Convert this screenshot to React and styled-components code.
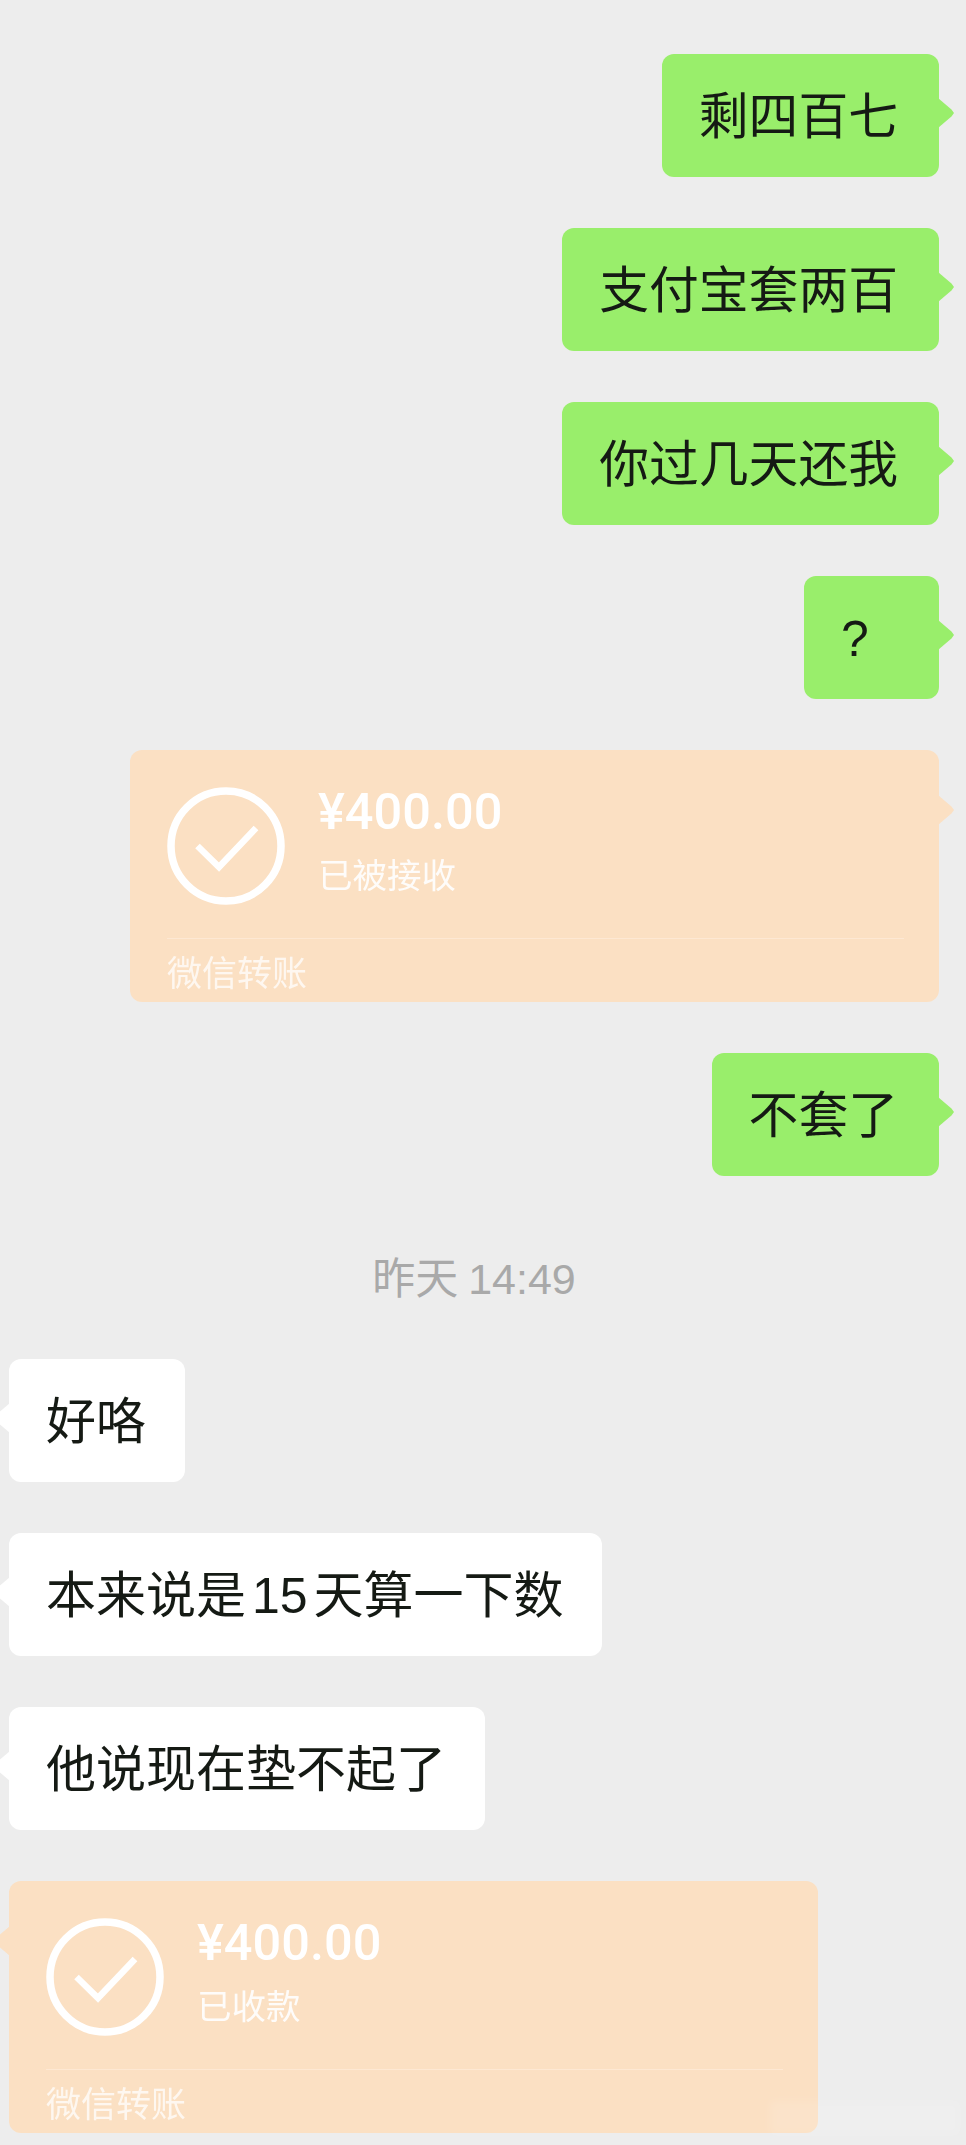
import styled, { createGlobalStyle, css } from 'styled-components';

const GlobalStyle = createGlobalStyle`
  html, body {
    margin: 0;
    padding: 0;
    background: #ededed;
  }
  body {
    font-family: "Liberation Sans", "Noto Sans CJK SC", sans-serif;
  }
`;

const Page = styled.div`
  width: 966px;
  height: 2145px;
  box-sizing: border-box;
  padding: 54px 27px 12px 9px;
  overflow: hidden;
  position: relative;
  background: #ededed;
  display: flex;
  flex-direction: column;
  gap: 51px;
`;

const Row = styled.div`
  display: flex;
  justify-content: ${(p) => (p.$mine ? 'flex-end' : 'flex-start')};
`;

const tail = css`
  position: relative;
  &::after {
    content: '';
    position: absolute;
    top: ${(p) => p.$tailTop}px;
    width: 16px;
    height: 30px;
    background: inherit;
    ${(p) =>
      p.$mine
        ? css`
            right: -15px;
            clip-path: polygon(0 0, 84% 38%, 100% 50%, 84% 62%, 0 100%);
          `
        : css`
            left: -15px;
            clip-path: polygon(100% 0, 16% 38%, 0 50%, 16% 62%, 100% 100%);
          `}
  }
`;

const Bubble = styled.div`
  ${tail}
  box-sizing: border-box;
  height: 123px;
  min-width: ${(p) => p.$minWidth || 0}px;
  padding: ${(p) => (p.$mine ? '0 41px 0 37px' : '0 39px 0 37px')};
  border-radius: 12px;
  background: ${(p) => (p.$mine ? '#99ee6b' : '#ffffff')};
  color: #151a14;
  font-size: ${(p) => (p.$mine ? 49.8 : 50)}px;
  line-height: 126px;
  word-spacing: -8px;
  white-space: nowrap;
`;

const TimeLabel = styled.div`
  margin-top: 23px;
  height: 58px;
  line-height: 58px;
  text-align: center;
  color: #a9a9a9;
  font-size: 43px;
  word-spacing: -2px;
`;

const TransferCard = styled.div`
  ${tail}
  box-sizing: border-box;
  width: ${(p) => p.$width}px;
  height: 252px;
  padding: 0 35px 0 37px;
  border-radius: 12px;
  background: #fbe0c3;
  color: #ffffff;
  display: flex;
  flex-direction: column;
`;

const CardBody = styled.div`
  height: 189px;
  flex: none;
  display: flex;
  align-items: flex-start;
  gap: 33px;
  padding-top: 37px;
  box-sizing: border-box;
  border-bottom: 1px solid #fde8d3;
`;

const CheckIcon = styled.svg`
  width: 118px;
  height: 118px;
  flex: none;
`;

const CardInfo = styled.div`
  display: flex;
  flex-direction: column;
`;

const Amount = styled.div`
  font-family: "Roboto", "Liberation Sans", sans-serif;
  font-weight: 500;
  font-size: 50.5px;
  line-height: 50px;
`;

const Status = styled.div`
  font-size: 34.5px;
  line-height: 50px;
  margin-top: 14px;
  opacity: 0.92;
`;

const CardFooter = styled.div`
  font-size: 35px;
  line-height: 50px;
  margin-top: 10px;
  opacity: 0.75;
`;

const Watermark = styled.div`
  position: absolute;
  right: 6px;
  bottom: 10px;
  width: 190px;
  height: 34px;
  background: rgba(255, 255, 255, 0.12);
  filter: blur(4px);
`;

const Check = () => (
  <CheckIcon viewBox="0 0 118 118" fill="none" stroke="#ffffff">
    <circle cx="59" cy="59" r="55" strokeWidth="7.5" />
    <path d="M30.5 59 L52 80 L89 41" strokeWidth="6.5" />
  </CheckIcon>
);

function Transfer({ mine, width, status }) {
  return (
    <Row $mine={mine}>
      <TransferCard $mine={mine} $width={width} $tailTop={45}>
        <CardBody>
          <Check />
          <CardInfo>
            <Amount>¥400.00</Amount>
            <Status>{status}</Status>
          </CardInfo>
        </CardBody>
        <CardFooter>微信转账</CardFooter>
      </TransferCard>
    </Row>
  );
}

function Message({ mine, minWidth, children }) {
  return (
    <Row $mine={mine}>
      <Bubble $mine={mine} $tailTop={44} $minWidth={minWidth}>
        {children}
      </Bubble>
    </Row>
  );
}

export default function App() {
  return (
    <Page>
      <GlobalStyle />
      <Message mine>剩四百七</Message>
      <Message mine>支付宝套两百</Message>
      <Message mine>你过几天还我</Message>
      <Message mine minWidth={135}>?</Message>
      <Transfer mine width={809} status="已被接收" />
      <Message mine>不套了</Message>
      <TimeLabel>昨天 14:49</TimeLabel>
      <Message>好咯</Message>
      <Message>本来说是 15 天算一下数</Message>
      <Message>他说现在垫不起了</Message>
      <Transfer width={809} status="已收款" />
      <Watermark />
    </Page>
  );
}
